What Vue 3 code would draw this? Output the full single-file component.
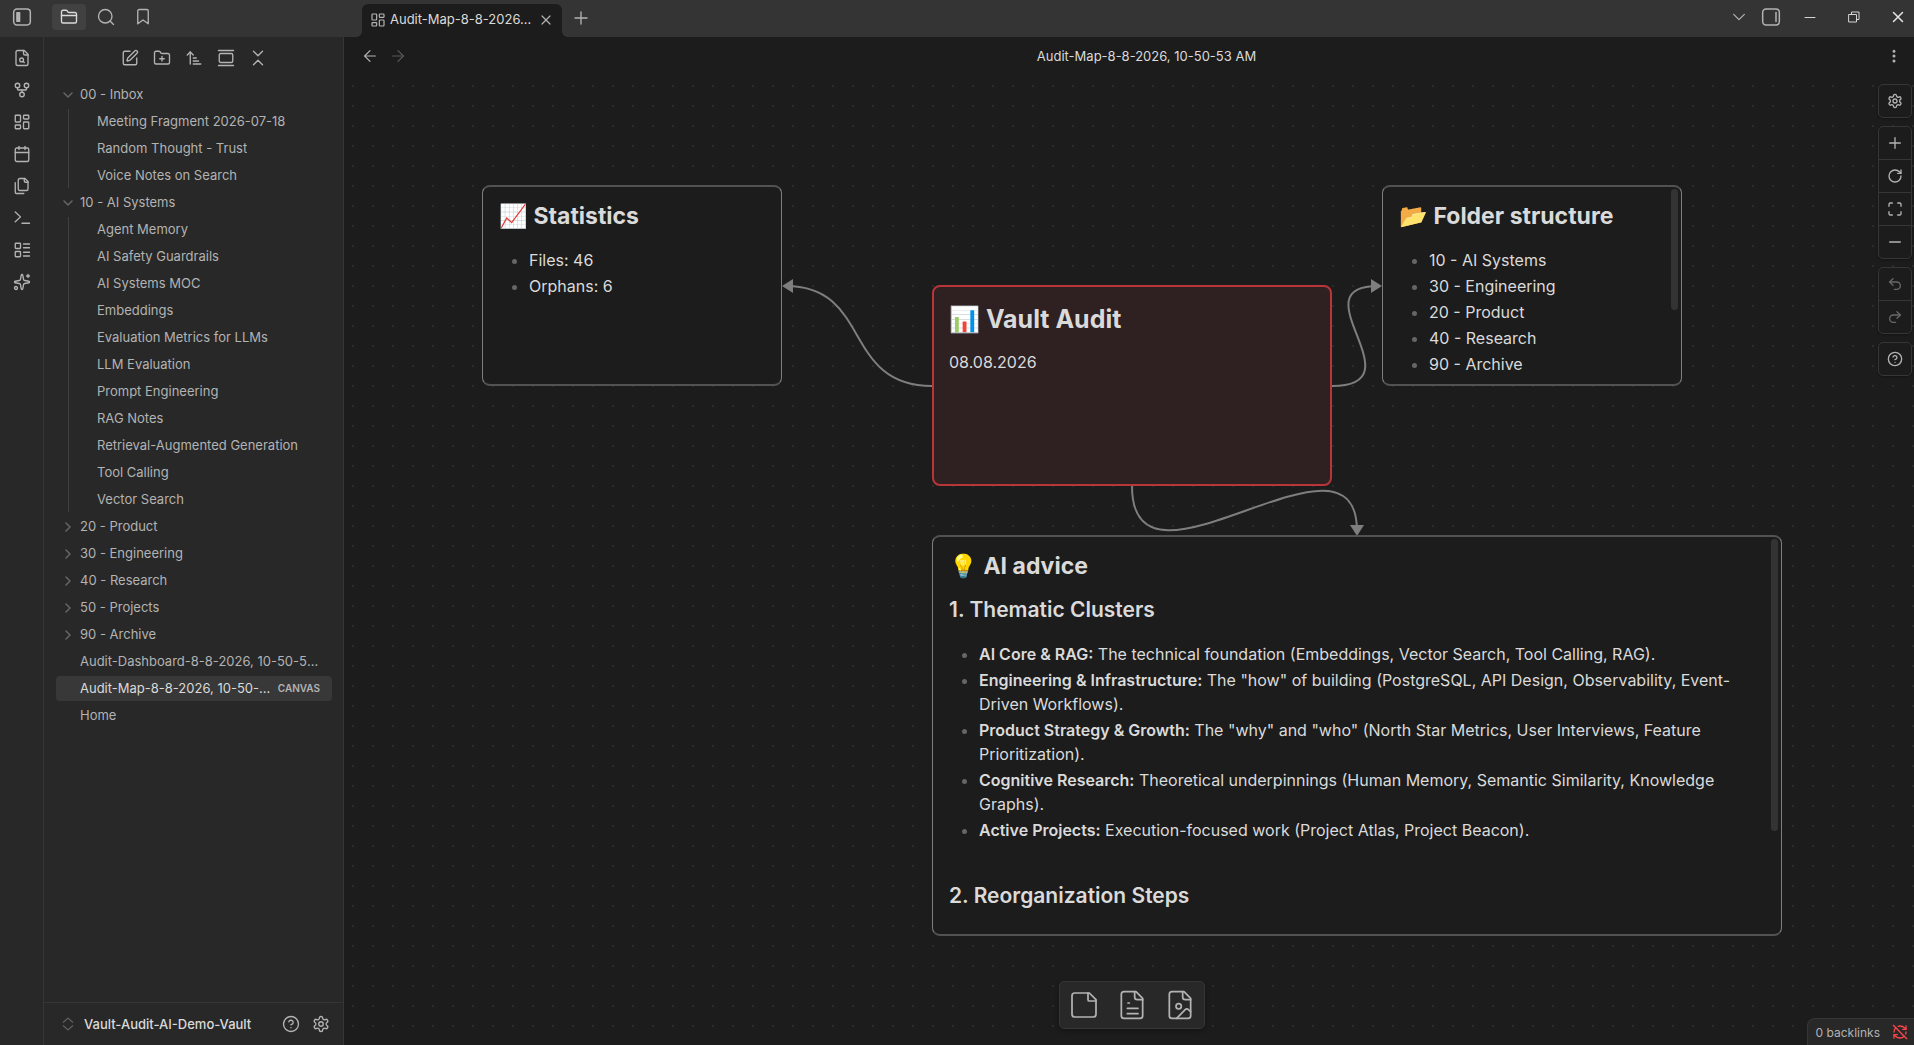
<template>
  <div class="app">
    <header class="titlebar">
      <div class="titlebar-left">
        <button class="bar-btn toggle-left" aria-label="Collapse sidebar"><Icon name="sidebarLeft" :size="20" /></button>
        <button class="bar-btn active" aria-label="Files"><Icon name="folder" :size="18" /></button>
        <button class="bar-btn" aria-label="Search"><Icon name="search" :size="18" /></button>
        <button class="bar-btn" aria-label="Bookmarks"><Icon name="bookmark" :size="18" /></button>
      </div>
      <div class="tabs">
        <div class="tab">
          <Icon name="dashboard" :size="16" />
          <span class="tab-title">Audit-Map-8-8-2026, 10-50-53 AM</span>
          <button class="tab-close" aria-label="Close tab"><Icon name="close" :size="16" /></button>
        </div>
        <button class="tab-new" aria-label="New tab"><Icon name="plus" :size="18" /></button>
      </div>
      <div class="window-controls">
        <button class="win-btn" aria-label="Tab list"><Icon name="chevronDown" :size="16" /></button>
        <button class="win-btn right-toggle" aria-label="Expand right sidebar"><Icon name="sidebarRight" :size="20" /></button>
        <div class="win-group">
          <button class="win-btn" aria-label="Minimize"><Icon name="minimize" :size="12" /></button>
          <button class="win-btn" aria-label="Restore"><Icon name="restore" :size="12" /></button>
          <button class="win-btn" aria-label="Close"><Icon name="winClose" :size="12" /></button>
        </div>
      </div>
    </header>

    <div class="workspace">
      <nav class="ribbon">
        <button v-for="item in ribbon" :key="item.icon" :aria-label="item.label">
          <Icon :name="item.icon" :size="18" />
        </button>
      </nav>

      <aside class="sidebar">
        <div class="nav-buttons">
          <button v-for="item in navButtons" :key="item.icon" :aria-label="item.label">
            <Icon :name="item.icon" :size="18" />
          </button>
        </div>

        <div class="tree">
          <template v-for="node in tree" :key="node.name">
            <template v-if="node.folder">
              <button class="row" @click="node.open = !node.open">
                <span class="chevron"><Icon :name="node.open ? 'chevronDown' : 'chevronRight'" :size="12" :stroke="3" /></span>
                <span class="row-name">{{ node.name }}</span>
              </button>
              <div v-if="node.open && node.children" class="children">
                <a v-for="child in node.children" :key="child" href="#" class="row">
                  <span class="row-name">{{ child }}</span>
                </a>
              </div>
            </template>
            <a v-else href="#" class="row" :class="{ current: node.tag }">
              <span class="row-name">{{ node.name }}</span>
              <span v-if="node.tag" class="row-tag">{{ node.tag }}</span>
            </a>
          </template>
        </div>

        <footer class="vault">
          <button class="vault-switch">
            <span class="chevron"><Icon name="chevronsUpDown" :size="14" /></span>
            <span>Vault-Audit-AI-Demo-Vault</span>
          </button>
          <button class="vault-btn" aria-label="Help"><Icon name="help" :size="18" /></button>
          <button class="vault-btn" aria-label="Settings"><Icon name="settings" :size="18" /></button>
        </footer>
      </aside>

      <main class="view">
        <div class="view-header">
          <button class="history" aria-label="Back"><Icon name="arrowLeft" :size="16" /></button>
          <button class="history" aria-label="Forward" disabled><Icon name="arrowRight" :size="16" /></button>
          <div class="view-title">Audit-Map-8-8-2026, 10-50-53 AM</div>
          <button class="more" aria-label="More options"><Icon name="more" :size="18" :stroke="2" /></button>
        </div>

        <div class="canvas">
          <div class="board">
            <svg class="edges" width="1" height="1">
              <g v-for="edge in edges" :key="edge.path">
                <path class="edge-line" :d="edge.path" />
                <polygon class="edge-arrow" :points="edge.arrow" />
              </g>
            </svg>

            <article
              v-for="card in cards"
              :key="card.title"
              class="card"
              :class="{ red: card.red }"
              :style="{ left: card.x + 'px', top: card.y + 'px', width: card.w + 'px', height: card.h + 'px' }"
            >
              <h1 v-if="card.red">{{ card.title }}</h1>
              <h2 v-else>{{ card.title }}</h2>
              <p v-if="card.text">{{ card.text }}</p>
              <ul v-if="card.items">
                <li v-for="item in card.items" :key="item">{{ item }}</li>
              </ul>
              <template v-for="section in card.sections" :key="section.title">
                <h3>{{ section.title }}</h3>
                <ul v-if="section.items">
                  <li v-for="item in section.items" :key="item.name">
                    <strong>{{ item.name }}:</strong> {{ item.text }}
                  </li>
                </ul>
              </template>
              <div v-if="card.thumb" class="thumb" :style="{ height: card.thumb + 'px' }"></div>
            </article>
          </div>

          <div class="controls">
            <div v-for="(group, i) in controls" :key="i" class="control-group">
              <button v-for="item in group" :key="item.icon" :aria-label="item.label" :disabled="item.disabled">
                <Icon :name="item.icon" :size="16" :stroke="2" />
              </button>
            </div>
          </div>

          <div class="card-menu">
            <button v-for="item in cardMenu" :key="item.icon" :aria-label="item.label">
              <Icon :name="item.icon" :size="32" :stroke="1.3" />
            </button>
          </div>

          <div class="status-bar">
            <span>0 backlinks</span>
            <Icon name="syncOff" :size="16" :stroke="2" class="sync" />
          </div>
        </div>
      </main>
    </div>
  </div>
</template>

<script setup>
import { h, ref } from 'vue'

const fileShape = '<path d="M15 2H6a2 2 0 0 0-2 2v16a2 2 0 0 0 2 2h12a2 2 0 0 0 2-2V7Z"/><path d="M14 2v4a2 2 0 0 0 2 2h4"/>'
const folderShape = '<path d="M20 20a2 2 0 0 0 2-2V8a2 2 0 0 0-2-2h-7.9a2 2 0 0 1-1.69-.9L9.6 3.9A2 2 0 0 0 7.93 3H4a2 2 0 0 0-2 2v13a2 2 0 0 0 2 2Z"/>'

const icons = {
  sidebarLeft: '<rect x="2" y="2.5" width="20" height="19" rx="4"/><rect x="5" y="6" width="5" height="12" rx="1" fill="currentColor" stroke="none"/>',
  sidebarRight: '<rect x="2" y="2.5" width="20" height="19" rx="4"/><path d="M18 6.5v11"/>',
  folder: folderShape + '<path d="M2 10h20"/>',
  search: '<circle cx="11" cy="11" r="9"/><path d="m22 22-4.6-4.6"/>',
  bookmark: '<path d="m19 21-7-5-7 5V4a2 2 0 0 1 2-2h10a2 2 0 0 1 2 2z"/>',
  dashboard: '<rect width="7" height="9" x="3" y="3" rx="1"/><rect width="7" height="5" x="14" y="3" rx="1"/><rect width="7" height="9" x="14" y="12" rx="1"/><rect width="7" height="5" x="3" y="16" rx="1"/>',
  close: '<path d="M18 6 6 18"/><path d="m6 6 12 12"/>',
  plus: '<path d="M4 12h16"/><path d="M12 4v16"/>',
  minus: '<path d="M4 12h16"/>',
  chevronDown: '<path d="m4 8 8 8 8-8"/>',
  chevronRight: '<path d="m8 4 8 8-8 8"/>',
  minimize: '<path d="M2 13h20"/>',
  restore: '<path d="M2 7h15v15H2z"/><path d="M7 7V2h15v15h-5"/>',
  winClose: '<path d="M3 3l18 18M21 3 3 21" stroke-width="3"/>',
  fileSearch: fileShape + '<circle cx="11.5" cy="14.5" r="2.5"/><path d="M13.3 16.3 15 18"/>',
  gitFork: '<circle cx="12" cy="18" r="3"/><circle cx="6" cy="6" r="3"/><circle cx="18" cy="6" r="3"/><path d="M18 9v2c0 .6-.4 1-1 1H7c-.6 0-1-.4-1-1V9"/><path d="M12 12v3"/>',
  calendar: '<path d="M8 2v4"/><path d="M16 2v4"/><rect width="18" height="18" x="3" y="4" rx="2"/><path d="M3 10h18"/>',
  files: '<path d="M20 7h-3a2 2 0 0 1-2-2V2"/><path d="M9 18a2 2 0 0 1-2-2V4a2 2 0 0 1 2-2h7l4 4v10a2 2 0 0 1-2 2Z"/><path d="M3 7.6v12.8A1.6 1.6 0 0 0 4.6 22h9.8"/>',
  terminal: '<path d="m3 17 7-6.5L3 4"/><path d="M12 19h10"/>',
  layoutList: '<rect width="7" height="7" x="3" y="3" rx="1"/><rect width="7" height="7" x="3" y="14" rx="1"/><path d="M14 4h8"/><path d="M14 9h8"/><path d="M14 15h8"/><path d="M14 20h8"/>',
  sparkles: '<path d="M11.017 2.814a1 1 0 0 1 1.966 0l1.051 5.558a2 2 0 0 0 1.594 1.594l5.558 1.051a1 1 0 0 1 0 1.966l-5.558 1.051a2 2 0 0 0-1.594 1.594l-1.051 5.558a1 1 0 0 1-1.966 0l-1.051-5.558a2 2 0 0 0-1.594-1.594l-5.558-1.051a1 1 0 0 1 0-1.966l5.558-1.051a2 2 0 0 0 1.594-1.594z"/><path d="M20 2v4"/><path d="M22 4h-4"/><circle cx="4" cy="20" r="2"/>',
  edit: '<path d="M12 3H5a2 2 0 0 0-2 2v14a2 2 0 0 0 2 2h14a2 2 0 0 0 2-2v-7"/><path d="M18.375 2.625a1 1 0 0 1 3 3l-9.013 9.014a2 2 0 0 1-.853.505l-2.873.84a.5.5 0 0 1-.62-.62l.84-2.873a2 2 0 0 1 .506-.852z"/>',
  folderPlus: folderShape + '<path d="M12 10v6"/><path d="M9 13h6"/>',
  sort: '<path d="m3 8 4-4 4 4"/><path d="M7 4v16"/><path d="M11 12h4"/><path d="M11 16h7"/><path d="M11 20h10"/>',
  gallery: '<path d="M2 2h20"/><rect width="18" height="12" x="3" y="6" rx="2"/><path d="M2 22h20"/>',
  collapse: '<path d="m6 21 6-6 6 6"/><path d="m6 3 6 6 6-6"/>',
  chevronsUpDown: '<path d="m4 15 8 7 8-7"/><path d="m4 9 8-7 8 7"/>',
  help: '<circle cx="12" cy="12" r="10"/><path d="M9.09 9a3 3 0 0 1 5.83 1c0 2-3 3-3 3"/><path d="M12 17h.01"/>',
  settings: '<path d="M12.22 2h-.44a2 2 0 0 0-2 2v.18a2 2 0 0 1-1 1.73l-.43.25a2 2 0 0 1-2 0l-.15-.08a2 2 0 0 0-2.73.73l-.22.38a2 2 0 0 0 .73 2.73l.15.1a2 2 0 0 1 1 1.72v.51a2 2 0 0 1-1 1.74l-.15.09a2 2 0 0 0-.73 2.73l.22.38a2 2 0 0 0 2.73.73l.15-.08a2 2 0 0 1 2 0l.43.25a2 2 0 0 1 1 1.73V20a2 2 0 0 0 2 2h.44a2 2 0 0 0 2-2v-.18a2 2 0 0 1 1-1.73l.43-.25a2 2 0 0 1 2 0l.15.08a2 2 0 0 0 2.73-.73l.22-.39a2 2 0 0 0-.73-2.73l-.15-.08a2 2 0 0 1-1-1.74v-.5a2 2 0 0 1 1-1.74l.15-.09a2 2 0 0 0 .73-2.73l-.22-.38a2 2 0 0 0-2.73-.73l-.15.08a2 2 0 0 1-2 0l-.43-.25a2 2 0 0 1-1-1.73V4a2 2 0 0 0-2-2z"/><circle cx="12" cy="12" r="3"/>',
  arrowLeft: '<path d="m12 20-8-8 8-8"/><path d="M20 12H4"/>',
  arrowRight: '<path d="M4 12h16"/><path d="m12 4 8 8-8 8"/>',
  more: '<circle cx="12" cy="12" r="1"/><circle cx="12" cy="5.5" r="1"/><circle cx="12" cy="18.5" r="1"/>',
  rotate: '<path d="M21 12a9 9 0 1 1-9-9c2.52 0 4.93 1 6.74 2.74L21 8"/><path d="M21 3v5h-5"/>',
  maximize: '<path d="M8 3H5a2 2 0 0 0-2 2v3"/><path d="M21 8V5a2 2 0 0 0-2-2h-3"/><path d="M3 16v3a2 2 0 0 0 2 2h3"/><path d="M16 21h3a2 2 0 0 0 2-2v-3"/>',
  undo: '<path d="M9 14 4 9l5-5"/><path d="M4 9h10.5a5.5 5.5 0 0 1 5.5 5.5a5.5 5.5 0 0 1-5.5 5.5H11"/>',
  redo: '<path d="m15 14 5-5-5-5"/><path d="M20 9H9.5A5.5 5.5 0 0 0 4 14.5A5.5 5.5 0 0 0 9.5 20H13"/>',
  note: '<path d="M16 3H5a2 2 0 0 0-2 2v14a2 2 0 0 0 2 2h14a2 2 0 0 0 2-2V8Z"/><path d="M15 3v5a1 1 0 0 0 1 1h5"/>',
  fileText: fileShape + '<path d="M10 10.5H9"/><path d="M16.500 14.500h-8"/><path d="M16.500 18.500h-8"/>',
  fileImage: fileShape + '<circle cx="11" cy="13" r="2"/><path d="m20 17-1.500-1.400a2 2 0 0 0-2.800 0L9.500 22"/>',
  syncOff: '<path d="M21 8 18.740 5.740A9.750 9.750 0 0 0 12 3C11 3 10.030 3.160 9.130 3.470"/><path d="M8 16H3v5"/><path d="M3 12C3 9.510 4 7.260 5.640 5.640"/><path d="m3 16 2.260 2.260A9.750 9.750 0 0 0 12 21c2.490 0 4.740-1 6.360-2.640"/><path d="M21 12c0 1-.160 1.970-.470 2.870"/><path d="M21 3v5h-5"/><path d="M22 22 2 2"/>'
}

const Icon = (props) => h('svg', {
  width: props.size,
  height: props.size,
  viewBox: '0 0 24 24',
  fill: 'none',
  stroke: 'currentColor',
  'stroke-width': props.stroke || 1.8,
  'stroke-linecap': 'round',
  'stroke-linejoin': 'round',
  innerHTML: icons[props.name]
})
Icon.props = ['name', 'size', 'stroke']

const ribbon = [
  { icon: 'fileSearch', label: 'Open quick switcher' },
  { icon: 'gitFork', label: 'Open graph view' },
  { icon: 'dashboard', label: 'Create new canvas' },
  { icon: 'calendar', label: 'Open daily note' },
  { icon: 'files', label: 'Insert template' },
  { icon: 'terminal', label: 'Open command palette' },
  { icon: 'layoutList', label: 'Create new base' },
  { icon: 'sparkles', label: 'Vault audit' }
]

const navButtons = [
  { icon: 'edit', label: 'New note' },
  { icon: 'folderPlus', label: 'New folder' },
  { icon: 'sort', label: 'Change sort order' },
  { icon: 'gallery', label: 'Auto-reveal current file' },
  { icon: 'collapse', label: 'Collapse all' }
]

const tree = ref([
  {
    name: '00 - Inbox',
    folder: true,
    open: true,
    children: ['Meeting Fragment 2026-07-18', 'Random Thought - Trust', 'Voice Notes on Search']
  },
  {
    name: '10 - AI Systems',
    folder: true,
    open: true,
    children: [
      'Agent Memory',
      'AI Safety Guardrails',
      'AI Systems MOC',
      'Embeddings',
      'Evaluation Metrics for LLMs',
      'LLM Evaluation',
      'Prompt Engineering',
      'RAG Notes',
      'Retrieval-Augmented Generation',
      'Tool Calling',
      'Vector Search'
    ]
  },
  { name: '20 - Product', folder: true, open: false },
  { name: '30 - Engineering', folder: true, open: false },
  { name: '40 - Research', folder: true, open: false },
  { name: '50 - Projects', folder: true, open: false },
  { name: '90 - Archive', folder: true, open: false },
  { name: 'Audit-Dashboard-8-8-2026, 10-50-53 AM' },
  { name: 'Audit-Map-8-8-2026, 10-50-53 AM', tag: 'CANVAS' },
  { name: 'Home' }
])

// board coordinates, origin in the middle of the canvas
const cards = [
  { title: '📈 Statistics', x: -650, y: -376, w: 300, h: 201, items: ['Files: 46', 'Orphans: 6'] },
  { title: '📊 Vault Audit', x: -200, y: -276, w: 400, h: 201, red: true, text: '08.08.2026' },
  {
    title: '📂 Folder structure',
    x: 250,
    y: -376,
    w: 300,
    h: 201,
    thumb: 121,
    items: ['10 - AI Systems', '30 - Engineering', '20 - Product', '40 - Research', '90 - Archive']
  },
  {
    title: '💡 AI advice',
    x: -200,
    y: -26,
    w: 850,
    h: 401,
    thumb: 292,
    sections: [
      {
        title: '1. Thematic Clusters',
        items: [
          { name: 'AI Core & RAG', text: 'The technical foundation (Embeddings, Vector Search, Tool Calling, RAG).' },
          { name: 'Engineering & Infrastructure', text: 'The "how" of building (PostgreSQL, API Design, Observability, Event-Driven Workflows).' },
          { name: 'Product Strategy & Growth', text: 'The "why" and "who" (North Star Metrics, User Interviews, Feature Prioritization).' },
          { name: 'Cognitive Research', text: 'Theoretical underpinnings (Human Memory, Semantic Similarity, Knowledge Graphs).' },
          { name: 'Active Projects', text: 'Execution-focused work (Project Atlas, Project Beacon).' }
        ]
      },
      { title: '2. Reorganization Steps' }
    ]
  }
]

const edges = [
  { path: 'M-200 -175C-290 -175 -260 -275 -346 -275', arrow: '-350,-275 -339,-282 -339,-268' },
  { path: 'M200 -175C288 -175 164 -275 246 -275', arrow: '250,-275 239,-282 239,-268' },
  { path: 'M0 -75C0 54 225 -152 225 -30', arrow: '225,-25 218,-36 232,-36' }
]

const controls = [
  [{ icon: 'settings', label: 'Canvas settings' }],
  [
    { icon: 'plus', label: 'Zoom in' },
    { icon: 'rotate', label: 'Reset zoom' },
    { icon: 'maximize', label: 'Zoom to fit' },
    { icon: 'minus', label: 'Zoom out' }
  ],
  [
    { icon: 'undo', label: 'Undo', disabled: true },
    { icon: 'redo', label: 'Redo', disabled: true }
  ],
  [{ icon: 'help', label: 'Canvas help' }]
]

const cardMenu = [
  { icon: 'note', label: 'Add card' },
  { icon: 'fileText', label: 'Add note from vault' },
  { icon: 'fileImage', label: 'Add media from vault' }
]
</script>

<style>
body {
  margin: 0;
  background: #1c1c1c;
}
</style>

<style scoped>
.app {
  display: flex;
  flex-direction: column;
  height: 100vh;
  overflow: hidden;
  font-family: Inter, "Noto Sans", sans-serif;
  font-size: 13px;
  line-height: 17px;
  color: #b3b3b3;
  background: #1c1c1c;
}

button {
  display: flex;
  align-items: center;
  justify-content: center;
  padding: 0;
  border: 0;
  font: inherit;
  color: inherit;
  background: none;
}

a {
  color: inherit;
  text-decoration: none;
}

svg {
  flex: none;
}

/* title bar */
.titlebar {
  display: flex;
  height: 37px;
  background: #343434;
}

.titlebar-left {
  display: flex;
  align-items: flex-start;
  box-sizing: border-box;
  width: 344px;
  padding: 4px 0 0 5px;
  gap: 3px;
}

.bar-btn {
  width: 34px;
  height: 26px;
  border-radius: 4px;
}

.toggle-left {
  margin-right: 10px;
}

.bar-btn.active {
  color: #dadada;
  background: #414141;
}

.tabs {
  display: flex;
  flex: 1;
  padding: 4px 0 0 18px;
}

.tab {
  position: relative;
  display: flex;
  align-items: center;
  box-sizing: border-box;
  width: 200px;
  padding: 0 8px 2px;
  gap: 4px;
  border-radius: 6px 6px 0 0;
  background: #1c1c1c;
}

.tab::before,
.tab::after {
  content: '';
  position: absolute;
  bottom: 0;
  width: 6px;
  height: 6px;
}

.tab::before {
  right: 100%;
  background: radial-gradient(circle at 0 0, transparent 6px, #1c1c1c 6px);
}

.tab::after {
  left: 100%;
  background: radial-gradient(circle at 100% 0, transparent 6px, #1c1c1c 6px);
}

.tab-title {
  flex: 1;
  overflow: hidden;
  text-overflow: ellipsis;
  white-space: nowrap;
  color: #dadada;
}

.tab-new {
  width: 38px;
  height: 28px;
}

.window-controls {
  display: flex;
  height: 34px;
}

.win-btn {
  width: 32px;
  height: 34px;
}

.right-toggle {
  margin-right: 7px;
}

.win-group {
  display: flex;
  gap: 12px;
  color: #e6e6e6;
}

/* left side */
.workspace {
  display: flex;
  flex: 1;
  min-height: 0;
}

.ribbon {
  display: flex;
  flex-direction: column;
  align-items: center;
  box-sizing: border-box;
  width: 44px;
  padding-top: 8px;
  gap: 6px;
  border-right: 1px solid #363636;
  background: #282828;
}

.ribbon button {
  width: 26px;
  height: 26px;
}

.sidebar {
  display: flex;
  flex-direction: column;
  box-sizing: border-box;
  width: 300px;
  border-right: 1px solid #363636;
  background: #282828;
}

.nav-buttons {
  display: flex;
  justify-content: center;
  padding: 8px 12px;
  gap: 2px;
}

.nav-buttons button {
  width: 30px;
  height: 26px;
}

.tree {
  flex: 1;
  padding: 3px 11px 0 12px;
  overflow: hidden;
}

.row {
  display: flex;
  align-items: center;
  box-sizing: border-box;
  width: 100%;
  height: 25px;
  margin-bottom: 2px;
  padding: 0 12px 0 24px;
  border-radius: 4px;
  text-align: left;
}

button.row {
  justify-content: flex-start;
  padding-left: 0;
}

.chevron {
  display: flex;
  justify-content: center;
  width: 24px;
  color: #666;
}

.row-name {
  overflow: hidden;
  text-overflow: ellipsis;
  white-space: nowrap;
}

.children {
  margin-left: 12px;
  border-left: 1px solid #404040;
}

.children .row {
  padding-left: 28px;
}

.row.current {
  color: #dadada;
  background: #383838;
}

.row-tag {
  margin-left: auto;
  padding-left: 4px;
  font-size: 10px;
  font-weight: 600;
  color: #b3b3b3;
}

.vault {
  display: flex;
  align-items: center;
  height: 42px;
  padding: 0 7px 0 12px;
  border-top: 1px solid #363636;
}

.vault-switch {
  flex: 1;
  justify-content: flex-start;
  gap: 4px;
  font-weight: 500;
  color: #dadada;
}

.vault-btn {
  width: 30px;
  height: 26px;
}

/* canvas view */
.view {
  display: flex;
  flex: 1;
  flex-direction: column;
  min-width: 0;
}

.view-header {
  display: flex;
  align-items: center;
  box-sizing: border-box;
  height: 40px;
  padding: 0 7px 2px 12px;
}

.history {
  width: 28px;
  height: 26px;
}

.history:disabled {
  opacity: 0.4;
}

.view-title {
  flex: 1;
  text-align: center;
  color: #dadada;
}

.more {
  width: 26px;
  height: 26px;
}

.canvas {
  position: relative;
  flex: 1;
  padding-left: 6px;
  overflow: hidden;
  background: radial-gradient(circle, #2c2c2c 1px, transparent 1px) -1px -1px / 20px 20px;
}

/* zero point of the board, everything else is placed around it */
.board {
  position: relative;
  top: 50%;
  left: 50%;
  width: 0;
  height: 0;
}

.edges {
  position: absolute;
  top: 0;
  left: 0;
  overflow: visible;
}

.edge-line {
  fill: none;
  stroke: #7e7e7e;
  stroke-width: 2;
}

.edge-arrow {
  fill: #7e7e7e;
}

.card {
  position: absolute;
  box-sizing: border-box;
  padding: 15px 16px;
  overflow: hidden;
  border: 1px solid #7e7e7e;
  border-width: 2px 1px;
  border-color: #525252 #7e7e7e;
  border-radius: 8px;
  font-size: 16px;
  line-height: 24px;
  color: #dadada;
  background: #1c1c1c;
}

.card.red {
  padding: 15px;
  border: 2px solid #b8353a;
  background: #2f2021;
}

.card h1,
.card h2,
.card h3 {
  margin: 0 0 16px;
  font-weight: 700;
}

.card h1 {
  margin-bottom: 14px;
  font-size: 25px;
  line-height: 34px;
}

.card h2 {
  font-size: 23px;
  line-height: 28px;
}

.card h3 {
  font-size: 21px;
  font-weight: 600;
  line-height: 28px;
}

.card p {
  margin: 0;
}

.card ul {
  display: flex;
  flex-direction: column;
  margin: 0;
  padding: 2px 0 0 30px;
  gap: 2px;
}

.card ul + h3 {
  margin-top: 40px;
}

.card li::marker {
  color: #666;
}

.card strong {
  font-weight: 600;
}

.thumb {
  position: absolute;
  top: 2px;
  right: 3px;
  width: 7px;
  border-radius: 4px;
  background: #333;
}

.controls {
  position: absolute;
  top: 7px;
  right: 2px;
  display: flex;
  flex-direction: column;
  gap: 8px;
}

.control-group {
  border: 1px solid #363636;
  border-radius: 5px;
  background: #1c1c1c;
  box-shadow: 0 1px 2px rgba(0, 0, 0, 0.3);
}

.control-group button {
  width: 32px;
  height: 32px;
}

.control-group button + button {
  height: 33px;
  border-top: 1px solid #363636;
}

.control-group button:disabled svg {
  opacity: 0.5;
}

.card-menu {
  position: absolute;
  bottom: 16px;
  left: calc(50% + 3px);
  display: flex;
  box-sizing: border-box;
  border: 1px solid #363636;
  border-radius: 5px;
  background: #282828;
  box-shadow: 0 2px 4px rgba(0, 0, 0, 0.3);
  transform: translateX(-50%);
}

.card-menu button {
  width: 48px;
  height: 46px;
}

.status-bar {
  position: absolute;
  right: 0;
  bottom: 0;
  display: flex;
  align-items: center;
  height: 26px;
  padding: 0 6px 0 8px;
  gap: 12px;
  border: 1px solid #363636;
  border-width: 1px 0 0 1px;
  border-radius: 8px 0 0 0;
  font-size: 12px;
  background: #282828;
}

.sync {
  color: #fb464c;
}
</style>
